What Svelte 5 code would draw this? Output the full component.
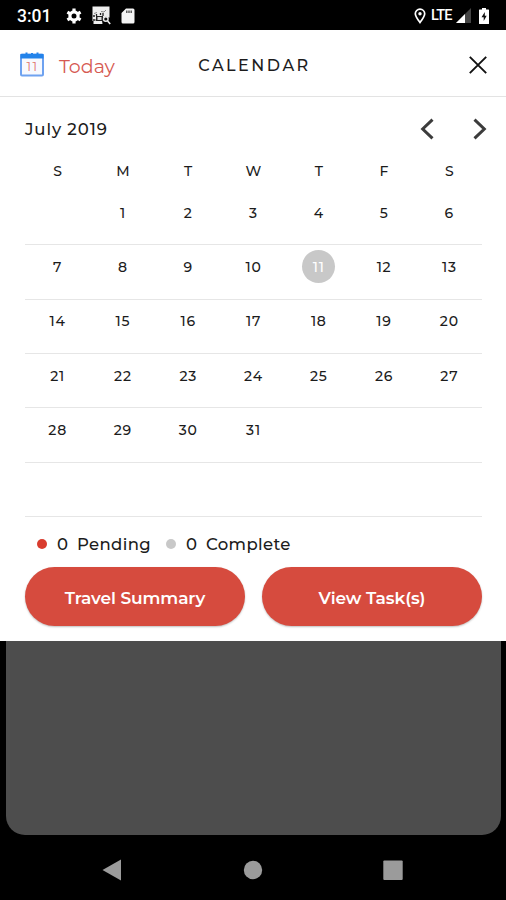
<script lang="ts">
  const weekdays = ['S', 'M', 'T', 'W', 'T', 'F', 'S'];
  const firstWeekday = 1;
  const daysInMonth = 31;

  let selected = $state(11);

  // six weeks, null where no day of the month falls
  const weeks = Array.from({ length: 6 }, (_, w) =>
    Array.from({ length: 7 }, (_, d) => {
      const day = w * 7 + d - firstWeekday + 1;
      return day >= 1 && day <= daysInMonth ? day : null;
    })
  );
</script>

<div class="screen">
  <div class="status">
    <span class="time">3:01</span>
    <svg class="gear" width="16" height="16" viewBox="0 0 16 16">
      <circle cx="8" cy="8" r="4.1" fill="none" stroke="#fff" stroke-width="3.2" />
      <path d="M8 .4v3M8 12.6v3M1.4 4.2L4 5.7M12 10.3l2.6 1.5M1.4 11.8L4 10.3M12 5.7l2.6-1.5" stroke="#fff" stroke-width="3.2" />
    </svg>
    <svg class="shot" width="19" height="19" viewBox="0 0 19 19">
      <path d="M.5.5h17v11h-1.500l-2-1-3 1-1 3 .5 3.500H1.500v-3H.5z" fill="#eee" />
      <path d="M2 7.500l3-1M9 5.500l3 .5 2-2" stroke="#888" stroke-width="1" fill="none" />
      <path d="M1 10h2M1 14h2.500M4.500 8v2M8.500 7v2M11 7v3" stroke="#222" stroke-width="1.300" />
      <path d="M4 10h7v5H4z" fill="#222" />
      <path d="M5.500 11h4v3h-4z" fill="#ddd" />
      <circle cx="13.800" cy="13" r="2.300" fill="#111" stroke="#eee" stroke-width="1.400" />
      <path d="M15.600 15l2.600 3" stroke="#eee" stroke-width="1.600" />
    </svg>
    <svg class="sd" width="14" height="16" viewBox="0 0 14 16">
      <path d="M5 .5h7a1.500 1.500 0 0 1 1.500 1.500v12a1.500 1.500 0 0 1-1.500 1.500H2A1.500 1.500 0 0 1 .5 14V5z" fill="#f4f4f4" />
      <path d="M5.800 2.500v2.500M8 2.500v2.500M10.200 2.500v2.500" stroke="#444" stroke-width="1.300" />
    </svg>
    <span class="grow"></span>
    <svg width="12" height="16" viewBox="0 0 12 16">
      <path d="M6 14.500C3.500 11.200 1.300 8.500 1.300 5.800a4.700 4.700 0 0 1 9.400 0c0 2.700-2.200 5.400-4.700 8.700z" fill="none" stroke="#fff" stroke-width="1.700" />
      <circle cx="6" cy="5.800" r="1.700" fill="#fff" />
    </svg>
    <span class="lte">LTE</span>
    <svg class="signal" width="16" height="15" viewBox="0 0 16 15">
      <path d="M0 15L15 0v15z" fill="#444" />
      <path d="M0 15L9 6v9z" fill="#fff" />
    </svg>
    <svg class="battery" width="10" height="16" viewBox="0 0 10 16">
      <path d="M3 0h4v1.500h2.500a.5.5 0 0 1 .5.500v13.500a.5.500 0 0 1-.5.500h-9a.5.500 0 0 1-.5-.5V2a.5.500 0 0 1 .5-.5H3z" fill="#fff" />
      <path d="M5.800 4L2.500 9.300h2.200V13l3-5.300H5.800z" fill="#111" />
    </svg>
  </div>

  <div class="sheet">
    <header>
      <button class="today" onclick={() => (selected = 11)}>
        <svg width="24" height="25" viewBox="0 0 24 25">
          <rect x="1" y="2.500" width="22" height="21" rx="1" fill="#f7f9fe" stroke="#6ea2f0" stroke-width="2" />
          <path d="M.5 2h23v4.500H.5z" fill="#2383ea" />
          <path d="M6.500 .5v3M17.500 .5v3M12 1v2" stroke="#2383ea" stroke-width="2" />
          <text x="12.500" y="19" text-anchor="middle">11</text>
        </svg>
        <span>Today</span>
      </button>
      <h1>CALENDAR</h1>
      <button class="close" aria-label="Close">
        <svg width="18" height="18" viewBox="0 0 18 18">
          <path d="M.8.8l16.400 16.400M17.200.8L.8 17.200" stroke="#111" stroke-width="1.900" />
        </svg>
      </button>
    </header>

    <div class="month">
      <span class="name">July 2019</span>
      <button aria-label="Previous month">
        <svg width="14" height="22" viewBox="0 0 14 22">
          <path d="M12.500 1.700L2.700 11l9.800 9.300" fill="none" stroke="#3c3c3c" stroke-width="3" />
        </svg>
      </button>
      <button aria-label="Next month">
        <svg width="14" height="22" viewBox="0 0 14 22">
          <path d="M1.500 1.700L11.300 11l-9.800 9.300" fill="none" stroke="#3c3c3c" stroke-width="3" />
        </svg>
      </button>
    </div>

    <div class="row weekdays">
      {#each weekdays as name}
        <span>{name}</span>
      {/each}
    </div>
    {#each weeks as week}
      <div class="row week">
        {#each week as day}
          {#if day}
            <button class="day" class:selected={day === selected} onclick={() => (selected = day)}>{day}</button>
          {:else}
            <span></span>
          {/if}
        {/each}
      </div>
    {/each}

    <div class="legend">
      <span class="dot pending"></span>
      <span class="count">0</span>
      <span class="pending-label">Pending</span>
      <span class="dot complete"></span>
      <span class="count">0</span>
      <span class="complete-label">Complete</span>
    </div>

    <div class="actions">
      <button class="travel">Travel Summary</button>
      <button class="tasks">View Task(s)</button>
    </div>
  </div>

  <div class="backdrop"></div>

  <nav>
    <svg width="20" height="22" viewBox="0 0 20 22"><path d="M.5 11L19 .5v21z" fill="#9b9b9b" /></svg>
    <svg width="20" height="22" viewBox="0 0 20 22"><circle cx="10" cy="11" r="9.200" fill="#9b9b9b" /></svg>
    <svg width="20" height="22" viewBox="0 0 20 22"><rect x=".3" y="1.500" width="19.400" height="19.400" rx="1" fill="#9b9b9b" /></svg>
  </nav>
</div>

<style>
  :global(body) {
    margin: 0;
    background: #000;
  }

  .screen {
    width: 506px;
    height: 900px;
    display: flex;
    flex-direction: column;
    background: #000;
    color: #1c1c1c;
    font-family: Montserrat, Inter, sans-serif;
    overflow: hidden;
  }

  button {
    padding: 0;
    border: none;
    background: none;
    color: inherit;
    font: inherit;
    cursor: pointer;
  }

  svg {
    display: block;
    flex: none;
  }

  .status {
    box-sizing: border-box;
    height: 30px;
    padding: 1px 16px 0 17px;
    display: flex;
    align-items: center;
    color: #fff;
    font-family: Roboto, sans-serif;
  }

  .time {
    width: 49px;
    font-size: 17.500px;
    font-weight: 500;
  }

  .shot {
    margin-left: 10px;
  }

  .sd {
    margin-left: 10px;
  }

  .grow {
    flex: 1;
  }

  .lte {
    margin-left: 5px;
    font-size: 14.500px;
    font-weight: 500;
    letter-spacing: -0.8px;
    width: 22px;
  }

  .signal {
    margin-left: 3px;
  }

  .battery {
    margin: 0 1px 0 7px;
  }

  .sheet {
    box-sizing: border-box;
    height: 611.400px;
    background: #fff;
    display: flex;
    flex-direction: column;
  }

  header {
    box-sizing: border-box;
    height: 67px;
    padding: 3px 19px 0 20px;
    border-bottom: 1px solid #e3e3e3;
    display: grid;
    grid-template-columns: 1fr auto 1fr;
    align-items: center;
  }

  .today {
    display: flex;
    align-items: center;
    gap: 15px;
    color: #d65a52;
    font-size: 19px;
    font-weight: 400;
  }

  .today span {
    padding-top: 3px;
  }

  .today text {
    fill: #df7469;
    font-size: 12.500px;
    letter-spacing: 1.500px;
  }

  h1 {
    margin: 0;
    padding: 2px 0 0 2px;
    font-size: 16px;
    font-weight: 500;
    letter-spacing: 2.500px;
  }

  .close {
    justify-self: end;
  }

  .month {
    height: 63px;
    padding: 0 19px 0 25px;
    display: flex;
    align-items: center;
    gap: 39px;
  }

  .name {
    flex: 1;
    font-size: 16.500px;
    font-weight: 500;
    letter-spacing: 0.9px;
  }

  .row {
    margin: 0 24px 0 25px;
    display: grid;
    grid-template-columns: repeat(7, 1fr);
    justify-items: center;
    font-size: 14px;
    font-weight: 500;
  }

  .weekdays {
    height: 31.200px;
    line-height: 23px;
  }

  .week {
    box-sizing: border-box;
    height: 54.300px;
    padding-top: 5px;
    border-bottom: 1px solid #e6e6e6;
  }

  .day {
    width: 33px;
    height: 33px;
    border-radius: 50%;
    letter-spacing: 0.8px;
  }

  .selected {
    background: #c8c8c8;
    color: #fff;
  }

  .legend {
    height: 50.300px;
    padding: 3px 37px 0;
    box-sizing: border-box;
    display: flex;
    align-items: center;
    font-size: 16.500px;
    font-weight: 500;
    letter-spacing: 0.350px;
  }

  .dot {
    width: 10px;
    height: 10px;
    border-radius: 50%;
  }

  .pending {
    background: #d93c2e;
  }

  .complete {
    background: #c8c8c8;
  }

  .count {
    width: 20px;
    margin-left: 10px;
  }

  .pending-label {
    width: 89px;
  }

  .actions {
    padding: 0 24px 0 25px;
    display: grid;
    grid-template-columns: 1fr 1fr;
    gap: 17px;
  }

  .actions button {
    height: 59px;
    padding-top: 2px;
    border-radius: 30px;
    background: #d64b3e;
    color: #fff;
    font-size: 17px;
    font-weight: 600;
    letter-spacing: -0.1px;
    box-shadow: 0 1px 2px rgba(0, 0, 0, 0.25);
  }

  .backdrop {
    height: 193.600px;
    margin: 0 5px 0 6px;
    background: #4d4d4d;
    border-radius: 0 0 19px 19px;
  }

  nav {
    flex: 1;
    padding: 6px 103px 0 102px;
    display: flex;
    align-items: center;
    justify-content: space-between;
  }
</style>
